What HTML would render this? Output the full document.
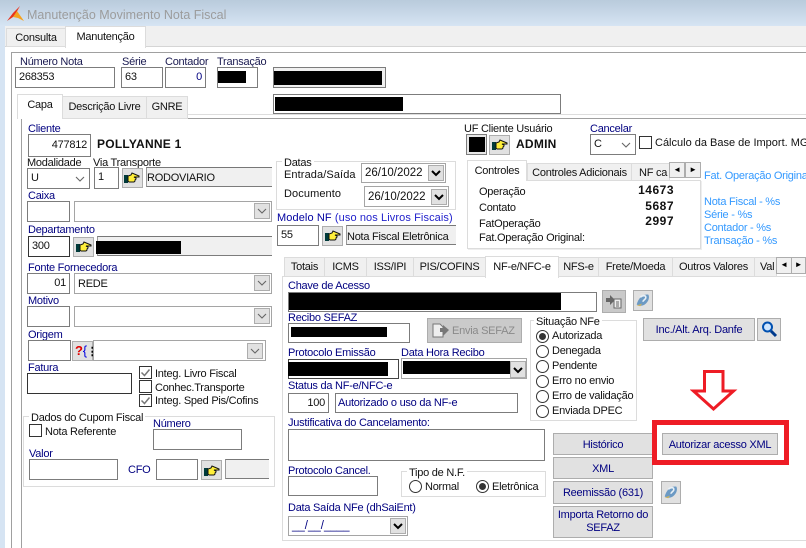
<!DOCTYPE html>
<html><head><meta charset="utf-8"><style>
html,body{margin:0;padding:0}
body{width:806px;height:548px;overflow:hidden;position:relative;background:#fff;font:11px/14px "Liberation Sans",sans-serif;letter-spacing:-.25px;color:#111}
div,span.a{position:absolute;box-sizing:border-box}
svg{position:absolute;display:block}
.t{white-space:nowrap;margin-top:1px}
.n{color:#000080;white-space:nowrap;margin-top:1px}
.f{background:#fff;border:1px solid #7c7c7c;padding:3px 3px;line-height:13px;white-space:nowrap}
.r{text-align:right}
.g{background:#f0f0f0;border-top:1px solid #777;border-left:1px solid #999;border-right:0;padding-left:0}
.c{background:#fff;border:1px solid #a5a5a5;line-height:14px;padding:3px 3px}
.d{font-size:11.5px;letter-spacing:0}
.dd{background:#e1e1e1;border:1px solid #adadad;width:16px;height:16px}
.hb{background:#e1e1e1;border:1px solid #adadad}
.k{background:#000}
.tab{background:#f0f0f0;border:1px solid #dcdcdc;text-align:center;white-space:nowrap;line-height:19px;overflow:hidden}
.on{background:#fff;border-bottom:0;z-index:3;line-height:20px}
.btn{background:#e1e1e1;border:1px solid #adadad;color:#000080;text-align:center;white-space:nowrap}
.grp{border:1px solid #dcdcdc}
.leg{background:#fff;white-space:nowrap;padding:0 2px;margin-top:1px}
.cb{width:13px;height:13px;background:#fff;border:1px solid #333}
.rd{width:13px;height:13px;border-radius:50%;background:#fff;border:1px solid #333}
.rd.s:after{content:"";position:absolute;left:2px;top:2px;width:7px;height:7px;border-radius:50%;background:#333}
.ar{background:#f0f0f0;border:1px solid #adadad;text-align:center;font-size:8px;line-height:14px;color:#000}
.bl{color:#3399ff;white-space:nowrap;margin-top:1px}
.bd{font-weight:bold;font-size:12px;letter-spacing:.25px;white-space:nowrap}
</style></head><body>
<svg width="0" height="0" style="position:absolute"><defs>
<symbol id="hand" viewBox="0 0 16 12"><path d="M0 3h4v8H0z" fill="#003a3a"/><path d="M4 4l3-1 1-2 7 3v1H10l2 1v1l-1 1v1l-1 1H5L4 9z" fill="#ffef3a" stroke="#111" stroke-width="1"/></symbol>
<symbol id="sch" viewBox="0 0 16 16"><path d="M4 6l4 4 4-4" fill="none" stroke="#666" stroke-width="1.1"/></symbol>
<symbol id="bch" viewBox="0 0 16 16"><path d="M4 6l4 4 4-4" fill="none" stroke="#000" stroke-width="2"/></symbol>
<symbol id="ck" viewBox="0 0 13 13"><path d="M2.500 6.500l3 3 5-6" fill="none" stroke="#777" stroke-width="1.500"/></symbol>
<symbol id="help" viewBox="0 0 20 20"><path d="M3 15C5 8 9 3 16 4c2 4-1 10-6 12-3 1-5 0-7-1z" fill="#6c9ac4"/><path d="M7 7c3-3 7-2 6 1-1 2-3 2-3 4" fill="none" stroke="#e8f0f6" stroke-width="1.800"/><path d="M3 16l4 1 2-3z" fill="#c8b060"/></symbol>
</defs></svg>

<!-- window chrome -->
<div style="left:0;top:0;width:806px;height:26px;background:linear-gradient(#b9cbdc,#d6e4f3)"></div>
<div style="left:0;top:26px;width:5px;height:522px;background:#d6e4f3"></div>
<svg style="left:6px;top:4px" width="19" height="19" viewBox="0 0 19 19"><path d="M14 2L7 9 1 17l6-4 3-4z" fill="#e8341c"/><path d="M7 13l4-6 7 10-6-3z" fill="#f5a21e"/></svg>
<div style="left:27px;top:7px;color:#9c9c9c;font-size:12.500px;line-height:16px;letter-spacing:0;white-space:nowrap">Manutenção Movimento Nota Fiscal</div>
<div style="left:5px;top:26px;width:801px;height:21px;background:#f0f0f0;border-bottom:1px solid #d5d5d5"></div>
<div class="tab" style="left:6px;top:28px;width:60px;height:19px">Consulta</div>
<div class="tab on" style="left:65px;top:26px;width:81px;height:22px">Manutenção</div>
<div style="left:11px;top:52px;width:795px;height:1px;background:#a0a0a0"></div>
<div style="left:11px;top:52px;width:1px;height:496px;background:#a0a0a0"></div>
<div style="left:21px;top:114px;width:785px;height:1px;background:#ddd"></div>
<div style="left:21px;top:118px;width:785px;height:1px;background:#a0a0a0"></div>
<div style="left:21px;top:118px;width:1px;height:430px;background:#a0a0a0"></div>

<!-- header -->
<div class="n" style="left:20px;top:54px;color:#1a1a50">Número Nota</div>
<div class="f" style="left:15px;top:67px;width:100px;height:21px">268353</div>
<div class="n" style="left:122px;top:54px;color:#1a1a50">Série</div>
<div class="f" style="left:121px;top:67px;width:42px;height:21px">63</div>
<div class="n" style="left:165px;top:54px;color:#1a1a50">Contador</div>
<div class="f r" style="left:165px;top:67px;width:41px;height:21px;color:#000080">0</div>
<div class="n" style="left:217px;top:54px;color:#1a1a50">Transação</div>
<div class="f" style="left:217px;top:67px;width:41px;height:21px"></div>
<div class="k" style="left:218px;top:71px;width:28px;height:12px"></div>
<div class="f" style="left:273px;top:67px;width:113px;height:21px;background:#f0f0f0"></div>
<div class="k" style="left:274px;top:71px;width:108px;height:14px"></div>
<div class="f" style="left:273px;top:94px;width:288px;height:20px"></div>
<div class="k" style="left:275px;top:97px;width:128px;height:14px"></div>

<div class="tab" style="left:62px;top:96px;width:85px;height:23px;line-height:21px">Descrição Livre</div>
<div class="tab" style="left:146px;top:96px;width:42px;height:23px;line-height:21px">GNRE</div>
<div class="tab on" style="left:17px;top:94px;width:46px;height:25px;line-height:20px">Capa</div>

<!-- Capa left column -->
<div class="n" style="left:28px;top:121px">Cliente</div>
<div class="f r" style="left:28px;top:134px;width:63px;height:23px;padding-top:4px">477812</div>
<div class="bd" style="left:97px;top:137px">POLLYANNE 1</div>
<div class="t" style="left:27px;top:155px">Modalidade</div>
<div class="f" style="left:27px;top:168px;width:63px;height:21px">U</div>
<svg style="left:72px;top:171px" width="16" height="16"><use href="#sch"/></svg>
<div class="t" style="left:93px;top:155px">Via Transporte</div>
<div class="f" style="left:94px;top:167px;width:25px;height:22px;padding-top:3px">1</div>
<div class="hb" style="left:122px;top:168px;width:21px;height:20px"></div>
<svg style="left:124px;top:172px" width="16" height="12"><use href="#hand"/></svg>
<div class="f g" style="left:146px;top:167px;width:126px;height:20px;padding-top:4px">RODOVIARIO</div>

<div class="n" style="left:28px;top:188px">Caixa</div>
<div class="f" style="left:27px;top:201px;width:43px;height:21px"></div>
<div class="c" style="left:74px;top:201px;width:198px;height:21px"></div>
<div class="dd" style="left:254px;top:203px"></div>
<svg style="left:254px;top:203px" width="16" height="16"><use href="#sch"/></svg>

<div class="n" style="left:28px;top:222px">Departamento</div>
<div class="f" style="left:28px;top:236px;width:42px;height:21px;border-color:#333">300</div>
<div class="hb" style="left:73px;top:237px;width:21px;height:20px"></div>
<svg style="left:76px;top:241px" width="16" height="12"><use href="#hand"/></svg>
<div class="f g" style="left:97px;top:236px;width:175px;height:20px"></div>
<div class="k" style="left:96px;top:241px;width:85px;height:13px"></div>

<div class="n" style="left:28px;top:260px">Fonte Fornecedora</div>
<div class="f r" style="left:27px;top:273px;width:43px;height:21px">01</div>
<div class="c" style="left:74px;top:273px;width:198px;height:21px">REDE</div>
<div class="dd" style="left:254px;top:275px"></div>
<svg style="left:254px;top:275px" width="16" height="16"><use href="#sch"/></svg>

<div class="n" style="left:28px;top:293px">Motivo</div>
<div class="f" style="left:27px;top:306px;width:43px;height:21px"></div>
<div class="c" style="left:74px;top:306px;width:198px;height:21px"></div>
<div class="dd" style="left:254px;top:308px"></div>
<svg style="left:254px;top:308px" width="16" height="16"><use href="#sch"/></svg>

<div class="n" style="left:28px;top:327px">Origem</div>
<div class="f" style="left:28px;top:340px;width:43px;height:21px"></div>
<div class="hb" style="left:72px;top:341px;width:21px;height:20px;font-weight:bold;font-size:13px;line-height:18px;white-space:nowrap;padding-left:2px"><span style="color:#e00000">?</span><span style="color:#0000e0;font-weight:normal">{</span><span style="color:#000;font-size:11px">⋮</span></div>
<div class="c" style="left:93px;top:340px;width:173px;height:21px"></div>
<div class="dd" style="left:247px;top:343px"></div>
<svg style="left:247px;top:343px" width="16" height="16"><use href="#sch"/></svg>

<div class="n" style="left:28px;top:360px">Fatura</div>
<div class="f" style="left:27px;top:373px;width:105px;height:21px;border-color:#333"></div>
<div class="cb" style="left:139px;top:366px"></div><svg style="left:139px;top:366px" width="13" height="13"><use href="#ck"/></svg>
<div class="t" style="left:155px;top:366px">Integ. Livro Fiscal</div>
<div class="cb" style="left:139px;top:380px"></div>
<div class="t" style="left:155px;top:380px">Conhec.Transporte</div>
<div class="cb" style="left:139px;top:394px"></div><svg style="left:139px;top:394px" width="13" height="13"><use href="#ck"/></svg>
<div class="t" style="left:155px;top:393px">Integ. Sped Pis/Cofins</div>

<div class="grp" style="left:23px;top:416px;width:252px;height:71px"></div>
<div class="leg" style="left:29px;top:410px">Dados do Cupom Fiscal</div>
<div class="cb" style="left:29px;top:424px"></div>
<div class="t" style="left:45px;top:424px">Nota Referente</div>
<div class="n" style="left:153px;top:416px">Número</div>
<div class="f" style="left:153px;top:429px;width:89px;height:21px"></div>
<div class="n" style="left:29px;top:446px">Valor</div>
<div class="f" style="left:29px;top:459px;width:89px;height:21px"></div>
<div class="n" style="left:128px;top:462px">CFO</div>
<div class="f" style="left:156px;top:459px;width:42px;height:21px"></div>
<div class="hb" style="left:201px;top:460px;width:21px;height:20px"></div>
<svg style="left:204px;top:465px" width="16" height="12"><use href="#hand"/></svg>
<div class="f g" style="left:225px;top:459px;width:44px;height:20px"></div>

<!-- Datas -->
<div class="grp" style="left:276px;top:161px;width:180px;height:49px"></div>
<div class="leg" style="left:282px;top:155px">Datas</div>
<div class="t" style="left:284px;top:167px;letter-spacing:.1px">Entrada/Saída</div>
<div class="c d" style="left:361px;top:163px;width:85px;height:20px;padding:2px 3px">26/10/2022</div>
<div class="dd" style="left:428px;top:165px"></div><svg style="left:428px;top:165px" width="16" height="16"><use href="#bch"/></svg>
<div class="t" style="left:284px;top:186px;letter-spacing:.1px">Documento</div>
<div class="c d" style="left:364px;top:186px;width:85px;height:21px">26/10/2022</div>
<div class="dd" style="left:431px;top:189px"></div><svg style="left:431px;top:189px" width="16" height="16"><use href="#bch"/></svg>
<div class="t" style="left:277px;top:210px;color:#2222cc;letter-spacing:.1px"><span style="color:#0000a0">Modelo NF</span> (uso nos Livros Fiscais)</div>
<div class="f" style="left:277px;top:225px;width:42px;height:21px">55</div>
<div class="hb" style="left:322px;top:226px;width:21px;height:20px"></div>
<svg style="left:325px;top:230px" width="16" height="12"><use href="#hand"/></svg>
<div class="f g" style="left:346px;top:225px;width:110px;height:20px;padding-top:5px">Nota Fiscal Eletrônica</div>

<!-- UF / Cancelar -->
<div class="t" style="left:464px;top:121px">UF Cliente Usuário</div>
<div class="f" style="left:466px;top:134px;width:21px;height:21px;background:#e8e8e8;padding:0"></div>
<div class="k" style="left:469px;top:137px;width:16px;height:15px"></div>
<div class="hb" style="left:489px;top:135px;width:21px;height:20px"></div>
<svg style="left:492px;top:139px" width="16" height="12"><use href="#hand"/></svg>
<div class="bd" style="left:516px;top:137px">ADMIN</div>
<div class="n" style="left:590px;top:121px">Cancelar</div>
<div class="f" style="left:590px;top:134px;width:46px;height:21px">C</div>
<svg style="left:618px;top:137px" width="16" height="16"><use href="#sch"/></svg>
<div class="cb" style="left:639px;top:136px"></div>
<div class="t" style="left:655px;top:135px;letter-spacing:0">Cálculo da Base de Import. MG.</div>

<!-- Controles -->
<div style="left:467px;top:180px;width:234px;height:69px;border:1px solid #dcdcdc;box-shadow:1px 1px 0 #eee"></div>
<div class="tab" style="left:527px;top:163px;width:105px;height:18px;line-height:18px">Controles Adicionais</div>
<div class="tab" style="left:631px;top:163px;width:39px;height:18px;line-height:18px;text-align:left;padding-left:7px">NF ca</div>
<div class="tab on" style="left:467px;top:160px;width:60px;height:21px;line-height:20px">Controles</div>
<div class="ar" style="left:669px;top:162px;width:16px;height:16px">◄</div>
<div class="ar" style="left:685px;top:162px;width:16px;height:16px">►</div>
<div class="t" style="left:479px;top:184px">Operação</div>
<div class="t" style="left:479px;top:200px">Contato</div>
<div class="t" style="left:479px;top:216px">FatOperação</div>
<div class="t" style="left:479px;top:230px">Fat.Operação Original:</div>
<div class="bd" style="left:620px;width:54px;top:183px;text-align:right;letter-spacing:.5px">14673</div>
<div class="bd" style="left:620px;width:54px;top:199px;text-align:right;letter-spacing:.5px">5687</div>
<div class="bd" style="left:620px;width:54px;top:214px;text-align:right;letter-spacing:.5px">2997</div>
<div class="bl" style="left:704px;top:168px">Fat. Operação Original</div>
<div class="bl" style="left:704px;top:194px">Nota Fiscal - %s</div>
<div class="bl" style="left:704px;top:207px">Série - %s</div>
<div class="bl" style="left:704px;top:220px">Contador - %s</div>
<div class="bl" style="left:704px;top:233px">Transação - %s</div>

<!-- lower tabs -->
<div style="left:282px;top:276px;width:524px;height:265px;border:1px solid #dcdcdc;border-right:0"></div>
<div class="tab" style="left:284px;top:257px;width:41px;height:20px">Totais</div>
<div class="tab" style="left:324px;top:257px;width:43px;height:20px">ICMS</div>
<div class="tab" style="left:366px;top:257px;width:48px;height:20px">ISS/IPI</div>
<div class="tab" style="left:413px;top:257px;width:73px;height:20px">PIS/COFINS</div>
<div class="tab" style="left:558px;top:257px;width:41px;height:20px">NFS-e</div>
<div class="tab" style="left:598px;top:257px;width:75px;height:20px">Frete/Moeda</div>
<div class="tab" style="left:672px;top:257px;width:83px;height:20px">Outros Valores</div>
<div class="tab" style="left:754px;top:257px;width:23px;height:20px;text-align:left;padding-left:5px">Val</div>
<div class="tab on" style="left:485px;top:256px;width:74px;height:22px">NF-e/NFC-e</div>
<div class="ar" style="left:776px;top:257px;width:16px;height:17px">◄</div>
<div class="ar" style="left:791px;top:257px;width:15px;height:17px">►</div>

<!-- NF-e content -->
<div class="n" style="left:288px;top:278px">Chave de Acesso</div>
<div class="f" style="left:288px;top:292px;width:309px;height:20px"></div>
<div class="k" style="left:289px;top:293px;width:272px;height:17px"></div>
<div class="hb" style="left:602px;top:290px;width:24px;height:23px;background:#c9c9c9"></div>
<svg style="left:605px;top:295px" width="18" height="14" viewBox="0 0 18 14"><path d="M1 3h4V0l5 5-5 5V7H1z" fill="#666"/><path d="M9 4h7v9H9z" fill="#eee" stroke="#666"/><path d="M11 7h3M11 9h3M11 11h3" stroke="#666"/></svg>
<div class="hb" style="left:633px;top:290px;width:20px;height:21px"></div>
<svg style="left:634px;top:291px" width="18" height="18"><use href="#help"/></svg>

<div class="n" style="left:288px;top:310px">Recibo SEFAZ</div>
<div class="f" style="left:288px;top:323px;width:122px;height:20px"></div>
<div class="k" style="left:291px;top:327px;width:96px;height:10px"></div>
<div class="hb" style="left:427px;top:318px;width:95px;height:25px;background:#cacaca"></div>
<svg style="left:432px;top:323px" width="18" height="15" viewBox="0 0 18 15"><path d="M1 1h7l3 3v10H1z" fill="#eee" stroke="#777"/><path d="M8 5h3V2l6 5-6 6v-4H8z" fill="#777"/></svg>
<div class="t" style="left:452px;top:323px;color:#8a8a8a">Envia SEFAZ</div>

<div class="n" style="left:288px;top:345px">Protocolo Emissão</div>
<div class="f" style="left:288px;top:359px;width:111px;height:20px;border-color:#444"></div>
<div class="k" style="left:288px;top:362px;width:100px;height:14px"></div>
<div class="n" style="left:401px;top:345px">Data Hora Recibo</div>
<div class="c" style="left:401px;top:358px;width:126px;height:21px"></div>
<div class="k" style="left:403px;top:361px;width:107px;height:13px"></div>
<div class="dd" style="left:510px;top:361px;height:17px"></div><svg style="left:510px;top:362px" width="16" height="16"><use href="#bch"/></svg>

<div class="n" style="left:288px;top:378px">Status da NF-e/NFC-e</div>
<div class="f r" style="left:288px;top:393px;width:41px;height:20px">100</div>
<div class="f" style="left:335px;top:393px;width:183px;height:20px;color:#000080;padding-left:2px">Autorizado o uso da NF-e</div>

<div class="grp" style="left:530px;top:320px;width:107px;height:101px"></div>
<div class="leg" style="left:534px;top:314px">Situação NFe</div>
<div class="rd s" style="left:536px;top:330px"></div><div class="n" style="left:552px;top:329px;color:#111;margin-top:0">Autorizada</div>
<div class="rd" style="left:536px;top:345px"></div><div class="t" style="left:552px;top:343px">Denegada</div>
<div class="rd" style="left:536px;top:360px"></div><div class="t" style="left:552px;top:358px">Pendente</div>
<div class="rd" style="left:536px;top:375px"></div><div class="t" style="left:552px;top:373px">Erro no envio</div>
<div class="rd" style="left:536px;top:390px"></div><div class="t" style="left:552px;top:388px">Erro de validação</div>
<div class="rd" style="left:536px;top:405px"></div><div class="t" style="left:552px;top:403px">Enviada DPEC</div>

<div class="btn" style="left:643px;top:318px;width:112px;height:23px;line-height:22px">Inc./Alt. Arq. Danfe</div>
<div class="hb" style="left:757px;top:318px;width:24px;height:23px"></div>
<svg style="left:760px;top:320px" width="18" height="18" viewBox="0 0 18 18"><circle cx="7.500" cy="7" r="4.500" fill="#cfe6ff" stroke="#0050b0" stroke-width="2"/><path d="M11 11l5 5" stroke="#003a8c" stroke-width="3"/></svg>

<svg style="left:690px;top:367px" width="48" height="46" viewBox="0 0 48 46"><path d="M14.500 4.500H33V24H43.500L23.500 42 3.500 24H14.500Z" fill="#fff" stroke="#ee1c25" stroke-width="3"/></svg>

<div class="n" style="left:288px;top:415px">Justificativa do Cancelamento:</div>
<div class="f" style="left:288px;top:429px;width:257px;height:32px"></div>
<div class="n" style="left:288px;top:463px">Protocolo Cancel.</div>
<div class="f" style="left:288px;top:476px;width:90px;height:20px"></div>
<div class="grp" style="left:401px;top:471px;width:145px;height:26px"></div>
<div class="leg" style="left:407px;top:465px">Tipo de N.F.</div>
<div class="rd" style="left:409px;top:480px"></div><div class="t" style="left:425px;top:479px">Normal</div>
<div class="rd s" style="left:476px;top:480px"></div><div class="t" style="left:492px;top:479px">Eletrônica</div>
<div class="n" style="left:288px;top:500px">Data Saída NFe (dhSaiEnt)</div>
<div class="c d" style="left:288px;top:516px;width:120px;height:20px;color:#000080;padding:2px 3px">__/__/____</div>
<div class="dd" style="left:390px;top:518px;height:16px"></div><svg style="left:390px;top:518px" width="16" height="16"><use href="#bch"/></svg>

<div class="btn" style="left:553px;top:433px;width:100px;height:22px;line-height:23px">Histórico</div>
<div class="btn" style="left:553px;top:457px;width:100px;height:22px;line-height:23px">XML</div>
<div class="btn" style="left:553px;top:481px;width:100px;height:23px;line-height:22px">Reemissão (631)</div>
<div class="btn" style="left:553px;top:506px;width:100px;height:32px;line-height:13px;padding-top:2px">Importa Retorno do<br>SEFAZ</div>
<div class="hb" style="left:661px;top:481px;width:20px;height:23px"></div>
<svg style="left:662px;top:483px" width="18" height="18"><use href="#help"/></svg>

<div style="left:652px;top:420px;width:137px;height:45px;border:5px solid #ee1c25"></div>
<div class="btn" style="left:662px;top:433px;width:116px;height:22px;line-height:22px">Autorizar acesso XML</div>
</body></html>
